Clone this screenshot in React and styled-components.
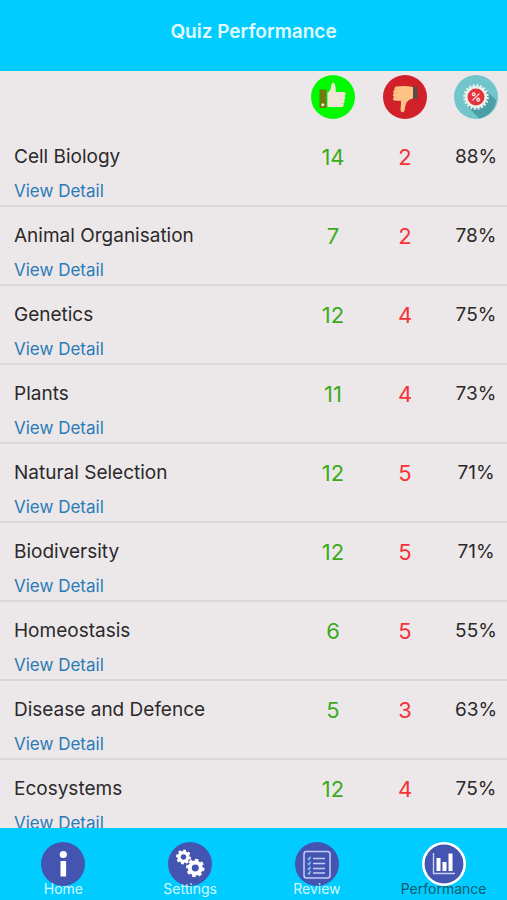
import React from 'react';
import styled, { createGlobalStyle } from 'styled-components';

const topics = [
  { name: 'Cell Biology', right: 14, wrong: 2, percent: 88 },
  { name: 'Animal Organisation', right: 7, wrong: 2, percent: 78 },
  { name: 'Genetics', right: 12, wrong: 4, percent: 75 },
  { name: 'Plants', right: 11, wrong: 4, percent: 73 },
  { name: 'Natural Selection', right: 12, wrong: 5, percent: 71 },
  { name: 'Biodiversity', right: 12, wrong: 5, percent: 71 },
  { name: 'Homeostasis', right: 6, wrong: 5, percent: 55 },
  { name: 'Disease and Defence', right: 5, wrong: 3, percent: 63 },
  { name: 'Ecosystems', right: 12, wrong: 4, percent: 75 },
];

const ThumbUpIcon = () => (
  <Icon viewBox="0 0 44 44" role="img" aria-label="Correct">
    <circle cx="22" cy="22" r="22" fill="#00fb00" />
    <rect x="8.5" y="14.5" width="7" height="18.5" fill="#6f7a10" />
    <circle cx="11.8" cy="29.8" r="1.5" fill="#f4f0da" />
    <path
      d="M16.5 18c2-1.2 3.2-3.4 3.6-6.2.3-2.6.8-4 2-4s2 1.4 2.4 4c.3 2 .3 3.500.2 5.200h8c2.400 0 2.500 3.600.5 3.900 1.700.6 1.500 3.500-.4 3.700 1.400.7 1.100 3.400-.6 3.600 1.100 1 .6 3.800-1.400 3.800H16.500z"
      fill="#f1e5d8"
    />
    <path d="M28.5 20.9h4.500M28.5 24.600h4.300M28.5 28.200h3.800" stroke="#d9d3b8" strokeWidth="0.6" />
  </Icon>
);

const ThumbDownIcon = () => (
  <Icon viewBox="0 0 44 44" role="img" aria-label="Incorrect">
    <circle cx="22" cy="22" r="22" fill="#d2202a" />
    <rect x="29.5" y="11.5" width="5" height="12.500" fill="#5c4b45" />
    <path
      d="M30 12v11.500c-4 .5-6.500 3-7.400 6.500-.7 3-.8 7.300-2.900 7.300-2.400 0-2.300-3-1.900-6 .3-2.400.2-4 0-5.500h-5.300c-2.900 0-3-3.200-1.200-3.700-1.900-.5-1.900-3.300-.1-3.800-1.500-.7-1.200-3.200.6-3.600-.8-1.200-.3-2.800 1.400-3.100 5-.9 11-1.100 16.800.4z"
      fill="#fcc384"
    />
    <path d="M11.5 22h4M11.500 18.400h4M12.500 14.800h4" stroke="#efb276" strokeWidth="0.6" />
  </Icon>
);

const PercentIcon = () => (
  <Icon viewBox="0 0 44 44" role="img" aria-label="Percentage">
    <circle cx="22" cy="22" r="22" fill="#72c6cb" />
    <path d="M31 14 42.3 25.3A22 22 0 0 1 25.5 43.7L13 31z" fill="#4b9fa6" />
    <circle cx="22" cy="22" r="11" fill="#e9f1ee" />
    <circle cx="22" cy="22" r="11.5" fill="none" stroke="#e9f1ee" strokeWidth="2.6" strokeDasharray="2 1.613" />
    <circle cx="22" cy="22" r="8.5" fill="#e3343b" />
    <text
      x="22"
      y="26"
      fill="#fff"
      fontFamily="Inter, sans-serif"
      fontSize="11"
      fontWeight="600"
      textAnchor="middle"
      transform="rotate(12 22 22)"
    >
      %
    </text>
  </Icon>
);

const HomeIcon = () => (
  <Icon viewBox="0 0 44 44" aria-hidden="true">
    <circle cx="22" cy="22" r="22" fill="#4355b0" />
    <circle cx="22.3" cy="12.5" r="3.6" fill="#fff" />
    <rect x="19.5" y="19" width="5.6" height="15.5" fill="#fff" />
  </Icon>
);

const Gear = ({ cx, cy, r }) => (
  <g transform={`translate(${cx} ${cy})`}>
    <circle r={r * 0.6} fill="none" stroke="#fff" strokeWidth={r * 0.44} />
    {[0, 45, 90, 135, 180, 225, 270, 315].map(angle => (
      <rect
        key={angle}
        x={-r * 0.19}
        y={-r}
        width={r * 0.38}
        height={r * 0.32}
        fill="#fff"
        transform={`rotate(${angle + 10})`}
      />
    ))}
  </g>
);

const SettingsIcon = () => (
  <Icon viewBox="0 0 44 44" aria-hidden="true">
    <circle cx="22" cy="22" r="22" fill="#4355b0" />
    <Gear cx={15.5} cy={15} r={7.4} />
    <Gear cx={27.3} cy={26} r={9.2} />
  </Icon>
);

const ReviewIcon = () => (
  <Icon viewBox="0 0 44 44" aria-hidden="true">
    <circle cx="22" cy="22" r="22" fill="#4355b0" />
    <rect x="9" y="9.5" width="26" height="26.5" rx="2.5" fill="none" stroke="#c3cdf3" strokeWidth="1.5" />
    <path d="M18 16.500h12M18 21.500h12M18 26.500h12M18 31h12" stroke="#c3cdf3" strokeWidth="1.5" />
    <path
      d="m12.800 16.300 1.200 1.300 1.500-3M12.800 21.300l1.200 1.300 1.500-3M12.800 26.300l1.200 1.300 1.500-3M12.800 30.800l1.200 1.300 1.500-3"
      fill="none"
      stroke="#86c9f5"
      strokeWidth="1.3"
    />
  </Icon>
);

const PerformanceIcon = () => (
  <Icon viewBox="0 0 44 44" aria-hidden="true">
    <circle cx="22" cy="22" r="20.7" fill="#4355b0" stroke="#fff" strokeWidth="2.6" />
    <path d="M11.5 11v20.500H33" fill="none" stroke="#c9d1f2" strokeWidth="1.4" />
    <path d="M14.500 16h4V29h-4zM20.500 20h4V29h-4zM26.500 11.500h4V29h-4z" fill="#fff" />
  </Icon>
);

const tabs = [
  { label: 'Home', icon: HomeIcon },
  { label: 'Settings', icon: SettingsIcon },
  { label: 'Review', icon: ReviewIcon },
  { label: 'Performance', icon: PerformanceIcon, active: true },
];

const TopicRow = ({ name, right, wrong, percent }) => (
  <tr>
    <TopicCell scope="row">
      <TopicName>{name}</TopicName>
      <DetailLink href="#detail">View Detail</DetailLink>
    </TopicCell>
    <ScoreCell $color="#3bab1d">{right}</ScoreCell>
    <ScoreCell $color="#f53237">{wrong}</ScoreCell>
    <PercentCell $color="#2b292b">{percent}%</PercentCell>
  </tr>
);

const App = () => (
  <Screen>
    <GlobalStyle />
    <Header>
      <Title>Quiz Performance</Title>
    </Header>
    <Content>
      <ScoreTable>
        <colgroup>
          <col />
          <ScoreCol />
          <ScoreCol />
          <PercentCol />
        </colgroup>
        <thead>
          <tr>
            <td />
            <HeadCell scope="col"><ThumbUpIcon /></HeadCell>
            <HeadCell scope="col"><ThumbDownIcon /></HeadCell>
            <HeadCell scope="col" $last><PercentIcon /></HeadCell>
          </tr>
        </thead>
        <tbody>
          {topics.map(topic => <TopicRow key={topic.name} {...topic} />)}
        </tbody>
      </ScoreTable>
    </Content>
    <TabBar>
      {tabs.map(({ label, icon: TabIcon, active }) => (
        <TabButton key={label} type="button" aria-current={active ? 'page' : undefined}>
          <TabIcon />
          <TabLabel $active={active}>{label}</TabLabel>
        </TabButton>
      ))}
    </TabBar>
  </Screen>
);

const GlobalStyle = createGlobalStyle`
  body {
    margin: 0;
    background-color: #ece8e9;
    font-family: Inter, "Liberation Sans", sans-serif;
  }
`

const Screen = styled.div`
  height: 100vh;
  display: grid;
  grid-template-rows: auto minmax(0, 1fr) auto;
`

const Header = styled.header`
  background-color: #00ccff;
  padding: 20px 16px 27px;
  text-align: center;
`

const Title = styled.h1`
  margin: 0;
  color: #e0fbff;
  font-size: 19px;
  line-height: 24px;
  font-weight: 600;
`

const Content = styled.main`
  overflow-y: auto;
  scrollbar-width: none;
`

const ScoreTable = styled.table`
  width: 100%;
  table-layout: fixed;
  border-collapse: separate;
  border-spacing: 0;
`

const ScoreCol = styled.col`
  width: 72px;
`

const PercentCol = styled.col`
  width: 66px;
`

const HeadCell = styled.th`
  padding: 4px 0 9px ${props => props.$last ? '4px' : '0'};
  vertical-align: top;
`

const Icon = styled.svg`
  width: 44px;
  height: 44px;
  display: block;
  margin: 0 auto;
`

const TopicCell = styled.th`
  padding: 16px 0 1px 14px;
  border-bottom: 2px solid #dbd7d9;
  text-align: left;
  font-weight: 400;
`

const TopicName = styled.div`
  color: #2b292b;
  font-size: 19px;
  line-height: 26px;
`

const DetailLink = styled.a`
  display: inline-block;
  padding-top: 8px;
  color: #2a7ab8;
  font-size: 17px;
  line-height: 26px;
  text-decoration: none;
  vertical-align: top;
`

const ScoreCell = styled.td`
  padding: 16px 0 0;
  border-bottom: 2px solid #dbd7d9;
  color: ${props => props.$color};
  font-size: 22px;
  line-height: 26px;
  text-align: center;
  vertical-align: top;
`

const PercentCell = styled(ScoreCell)`
  padding-left: 4px;
  font-size: 19px;
`

const TabBar = styled.nav`
  display: grid;
  grid-template-columns: repeat(4, 1fr);
  background-color: #00ccff;
`

const TabButton = styled.button`
  display: grid;
  padding: 14px 0 2px;
  border: none;
  background: none;
  font-family: inherit;
  cursor: pointer;

  /* the label sits over the lower edge of the icon */
  > * {
    grid-area: 1 / 1;
  }
`

const TabLabel = styled.span`
  align-self: end;
  padding-top: 38px;
  color: ${props => props.$active ? '#105a70' : '#d5f8ff'};
  font-size: 14px;
  line-height: 18px;
`

export default App;
